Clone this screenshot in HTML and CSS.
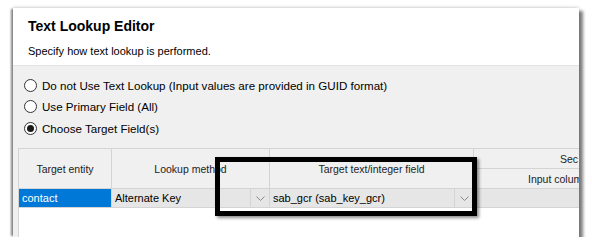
FILE: index.html
```html
<!DOCTYPE html>
<html lang="en">

<head>
  <meta charset="UTF-8">
  <meta name="viewport" content="width=device-width, initial-scale=1.0">
  <title>Text Lookup Editor</title>
  <link rel="stylesheet" href="styles.css">
</head>

<body>
  <div class="dialog">
    <header class="dialog-head">
      <h1>Text Lookup Editor</h1>
      <p>Specify how text lookup is performed.</p>
    </header>

    <section class="dialog-body">
      <ul class="options">
        <li><span class="radio"></span>Do not Use Text Lookup (Input values are provided in GUID format)</li>
        <li><span class="radio"></span>Use Primary Field (All)</li>
        <li><span class="radio checked"></span>Choose Target Field(s)</li>
      </ul>

      <div class="grid">
        <div class="hcell tall">Target entity</div>
        <div class="hcell tall">Lookup method</div>
        <div class="hcell tall">Target text/integer field</div>
        <div class="hcell group">Sec</div>
        <div class="hcell sub">Input colum</div>

        <div class="cell selected">contact</div>
        <div class="cell combo"><span>Alternate Key</span><i class="arrow"><svg width="9" height="5" viewBox="0 0 9 5"><polyline points="0.5,0.5 4.5,4.5 8.5,0.5" fill="none" stroke="#8a8a8a" stroke-width="1"/></svg></i></div>
        <div class="cell combo"><span>sab_gcr (sab_key_gcr)</span><i class="arrow"><svg width="9" height="5" viewBox="0 0 9 5"><polyline points="0.5,0.5 4.5,4.5 8.5,0.5" fill="none" stroke="#8a8a8a" stroke-width="1"/></svg></i></div>
        <div class="cell"></div>
      </div>

      <!-- highlight drawn on top of the screenshot -->
      <div class="marker"></div>
    </section>
  </div>
</body>

</html>
```

FILE: styles.css
```css
body {
  margin: 0;
  padding: 8px 0 0 13px;
  background: #fff;
  font-family: "Liberation Sans", Arial, sans-serif;
  color: #000;
}

.dialog {
  width: 566px;
  height: 229px;
  display: flex;
  flex-direction: column;
  overflow: hidden;
  background: #fff;
  box-shadow: -3px 0 2px -1px rgba(0, 0, 0, 0.45), 4px 3px 3px rgba(0, 0, 0, 0.5), 0 -1px 3px rgba(0, 0, 0, 0.15);
}

.dialog-head {
  height: 58px;
  padding-left: 15px;
  border-bottom: 1px solid #e3e3e3;
}

.dialog-head h1 {
  margin: 9px 0 0;
  font-size: 14px;
  line-height: 18px;
  font-weight: bold;
}

.dialog-head p {
  margin: 9px 0 0;
  font-size: 11px;
  line-height: 14px;
}

.dialog-body {
  position: relative;
  flex: 1;
  background: #f0f0f0;
  padding: 9px 0 0 5px;
}

.options {
  list-style: none;
  margin: 0 0 9px;
  padding: 0 0 0 6px;
}

.options li {
  display: flex;
  align-items: center;
  gap: 5px;
  height: 21.5px;
  font-size: 11.6px;
}

.radio {
  width: 11px;
  height: 11px;
  border: 1px solid #333;
  border-radius: 50%;
  background: #fff;
  display: flex;
  align-items: center;
  justify-content: center;
}

.radio.checked::after {
  content: "";
  width: 7px;
  height: 7px;
  border-radius: 50%;
  background: #1a1a1a;
}

/* data grid */
.grid {
  display: grid;
  grid-template-columns: 93px 158px 204px 220px;
  grid-template-rows: 20px 20px 19px 1fr;
  height: 88px;
  background: #fff;
  border-top: 1px solid #d4d4d4;
  border-left: 1px solid #d4d4d4;
  font-size: 10.5px;
}

.hcell,
.cell {
  box-sizing: border-box;
  border-right: 1px solid #d4d4d4;
  border-bottom: 1px solid #d4d4d4;
  white-space: nowrap;
  overflow: hidden;
}

.hcell {
  background: #f0f0f0;
  color: #222;
  display: flex;
  align-items: center;
  justify-content: center;
}

.hcell.tall {
  grid-row: 1 / 3;
}

.hcell.group {
  grid-column: 4;
  justify-content: flex-start;
  padding-left: 86px;
}

.hcell.sub {
  grid-column: 4;
  justify-content: flex-start;
  padding-left: 54px;
}

.cell {
  background: #e6e6e6;
  font-size: 11px;
  display: flex;
  align-items: center;
  padding-left: 3px;
}

.cell.selected {
  background: #0078d7;
  color: #fff;
}

.cell.combo {
  padding-left: 0;
}

.cell.combo span {
  flex: 1;
  padding-left: 3px;
}

.arrow {
  width: 18px;
  height: 100%;
  border-left: 1px solid #d4d4d4;
  display: flex;
  align-items: center;
  justify-content: center;
}

.marker {
  position: absolute;
  left: 202px;
  top: 91px;
  width: 252px;
  height: 49px;
  border: 5px solid #000;
  box-shadow: 2px 2px 3px rgba(0, 0, 0, 0.45);
}
```
